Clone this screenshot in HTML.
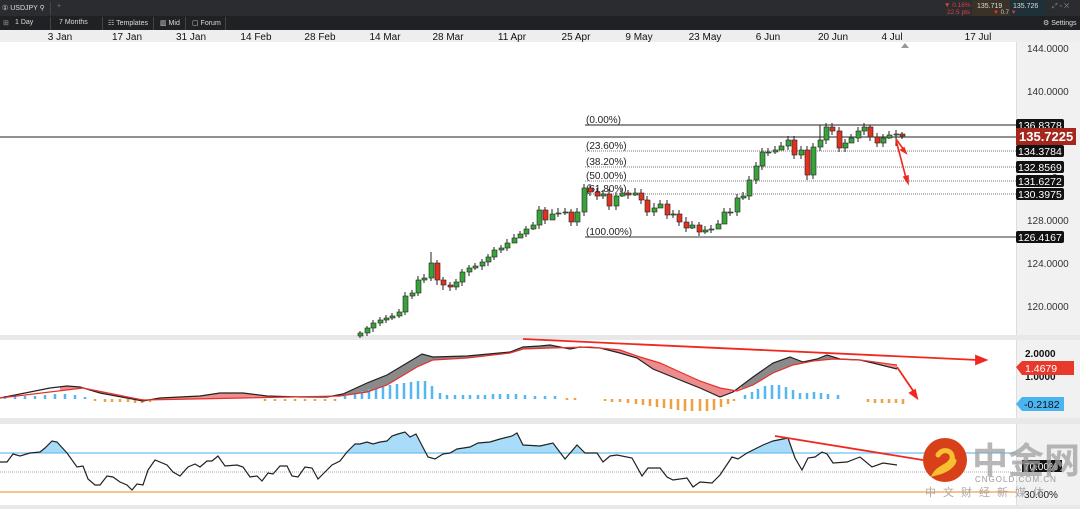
<!DOCTYPE html>
<html><head><meta charset="utf-8"><style>
body{margin:0;width:1080px;height:509px;overflow:hidden;background:#fff;font-family:"Liberation Sans",sans-serif;position:relative}
.tb{position:absolute;left:0;top:0;width:1080px;height:16px;background:#2a2c2f}
.tb2{position:absolute;left:0;top:16px;width:1080px;height:14px;background:#1f2124}
.t{position:absolute;color:#ddd;font-size:7px;white-space:nowrap}
svg{position:absolute;left:0;top:0}
</style></head><body>
<div class="tb"></div><div class="tb2"></div>
<div class="t" style="left:2px;top:4px">① USDJPY ⚲</div>
<div style="position:absolute;left:50px;top:2px;width:1px;height:13px;background:#444"></div>
<div class="t" style="left:57px;top:3px;color:#777">+</div>
<div class="t" style="left:3px;top:19px;color:#999">⊞</div>
<div class="t" style="left:15px;top:19px">1 Day</div>
<div class="t" style="left:59px;top:19px">7 Months</div>
<div class="t" style="left:108px;top:19px">☷ Templates</div>
<div class="t" style="left:160px;top:19px">▥ Mid</div>
<div class="t" style="left:192px;top:19px">▢ Forum</div>
<div style="position:absolute;left:50px;top:17px;width:1px;height:13px;background:#444"></div>
<div style="position:absolute;left:102px;top:17px;width:1px;height:13px;background:#444"></div>
<div style="position:absolute;left:153px;top:17px;width:1px;height:13px;background:#444"></div>
<div style="position:absolute;left:185px;top:17px;width:1px;height:13px;background:#444"></div>
<div style="position:absolute;left:225px;top:17px;width:1px;height:13px;background:#444"></div>
<div class="t" style="left:944px;top:2px;color:#e04040;font-size:6.5px">▼ 0.16%</div>
<div class="t" style="left:947px;top:9px;color:#e04040;font-size:6.5px">22.5 pts</div>
<div style="position:absolute;left:972px;top:0;width:38px;height:16px;background:#3a3226"></div>
<div style="position:absolute;left:1010px;top:0;width:36px;height:16px;background:#1e3038"></div>
<div class="t" style="left:977px;top:3px;font-size:7px">135.719</div>
<div class="t" style="left:1013px;top:3px;font-size:7px">135.726</div>
<div class="t" style="left:993px;top:10px;font-size:6px;color:#ccc"><span style="color:#e33">▼</span> 0.7 <span style="color:#e33">▼</span></div>
<div class="t" style="left:1052px;top:3px;color:#888">⤢ ▫ ✕</div>
<div class="t" style="left:1043px;top:19px">⚙ Settings</div>
<div style="position:absolute;left:0;top:30px;width:1080px;height:12px;background:#eee"></div>
<div style="position:absolute;left:1016px;top:42px;width:64px;height:467px;background:#f1f1f1;border-left:1px solid #ddd"></div>
<svg width="1080" height="509" font-family="Liberation Sans">
<defs>
<clipPath id="above"><rect x="0" y="420" width="1016" height="33"/></clipPath>
<clipPath id="gr"><rect x="340" y="340" width="222" height="80"/><rect x="742" y="340" width="105" height="80"/></clipPath>
<clipPath id="rd"><rect x="60" y="340" width="280" height="80"/><rect x="562" y="340" width="180" height="80"/><rect x="847" y="340" width="60" height="80"/></clipPath>
</defs>
<g font-size="10" fill="#111" text-anchor="middle">
<text x="60" y="40">3 Jan</text><text x="127" y="40">17 Jan</text><text x="191" y="40">31 Jan</text><text x="256" y="40">14 Feb</text><text x="320" y="40">28 Feb</text><text x="385" y="40">14 Mar</text><text x="448" y="40">28 Mar</text><text x="512" y="40">11 Apr</text><text x="576" y="40">25 Apr</text><text x="639" y="40">9 May</text><text x="705" y="40">23 May</text><text x="768" y="40">6 Jun</text><text x="833" y="40">20 Jun</text><text x="892" y="40">4 Jul</text><text x="978" y="40">17 Jul</text>
</g>
<path d="M901 48l4-5 4 5z" fill="#999"/>
<rect x="0" y="335" width="1080" height="5" fill="#e8e8e8"/>
<rect x="0" y="418" width="1080" height="6" fill="#e8e8e8"/>
<rect x="0" y="505" width="1080" height="4" fill="#e8e8e8"/>
<g font-size="10" fill="#333">
<text x="1027" y="52">144.0000</text><text x="1027" y="95">140.0000</text><text x="1027" y="224">128.0000</text><text x="1027" y="267">124.0000</text><text x="1027" y="310">120.0000</text><text x="1052" y="181">0</text>
</g>
<line x1="585" y1="125" x2="1016" y2="125" stroke="#222"/>
<line x1="0" y1="137" x2="1016" y2="137" stroke="#222"/>
<g stroke="#777" stroke-dasharray="1,1"><line x1="585" y1="151" x2="1016" y2="151"/><line x1="585" y1="167" x2="1016" y2="167"/><line x1="585" y1="181" x2="1016" y2="181"/><line x1="585" y1="194" x2="1016" y2="194"/></g>
<line x1="585" y1="237" x2="1016" y2="237" stroke="#777" stroke-width="1.5"/>
<g font-size="10" fill="#222"><text x="586" y="123">(0.00%)</text><text x="586" y="149">(23.60%)</text><text x="586" y="165">(38.20%)</text><text x="586" y="179">(50.00%)</text><text x="586" y="192">(61.80%)</text><text x="586" y="235">(100.00%)</text></g>
<g font-size="10.5" fill="#fff">
<rect x="1016" y="119" width="48" height="12" rx="2" fill="#111"/><text x="1018" y="129">136.8378</text>
<rect x="1016" y="145" width="48" height="12" rx="2" fill="#111"/><text x="1018" y="155">134.3784</text>
<rect x="1016" y="161" width="48" height="12" rx="2" fill="#111"/><text x="1018" y="171">132.8569</text>
<rect x="1016" y="175" width="48" height="12" rx="2" fill="#111"/><text x="1018" y="185">131.6272</text>
<rect x="1016" y="188" width="48" height="12" rx="2" fill="#111"/><text x="1018" y="198">130.3975</text>
<rect x="1016" y="231" width="48" height="12" rx="2" fill="#111"/><text x="1018" y="241">126.4167</text>
<rect x="1016" y="128" width="60" height="17" fill="#a5261c"/><text x="1019" y="141" font-size="13" font-weight="bold">135.7225</text>
</g>
<path stroke="#222" stroke-width="1" fill="none" d="M360 331v7M367 326v10M373 320v12M380 317v9M386 315v8M392 313v7M399 309v9M405 292v23M412 290v9M418 276v20M424 274v9M431 252v29M437 260v25M443 277v13M450 282v9M456 279v11M462 269v17M469 265v11M475 263v7M482 259v11M488 254v12M494 247v13M501 245v8M507 239v12M514 234v8M520 231v7M526 226v11M533 222v8M539 206v23M545 207v17M552 209v9M558 208v9M565 208v7M571 209v17M577 208v18M584 184v32M590 184v12M597 188v12M603 190v9M609 189v21M616 192v18M622 188v9M628 190v9M635 188v8M641 189v15M647 196v20M654 203v13M660 200v8M667 200v19M673 210v8M679 210v16M686 217v15M692 221v8M699 222v14M705 226v8M711 225v8M718 220v9M724 208v8M730 208v8M737 194v22M743 192v8M749 176v24M756 162v22M762 148v22M768 148v8M775 146v8M781 142v8M788 136v14M794 136v23M801 146v13M807 146v34M813 143v36M820 125v26M826 123v21M832 123v12M839 127v25M845 139v13M851 134v8M858 127v15M864 123v12M870 125v16M877 133v14M883 134v13M889 131v8M896 130v16M902 132v7"/>
<g fill="#3aa23a" stroke="#222" stroke-width=".6">
<rect x="358" y="333" width="5" height="3"/><rect x="365" y="328" width="5" height="5"/><rect x="371" y="323" width="5" height="5"/><rect x="378" y="320" width="5" height="3"/><rect x="384" y="318" width="5" height="2"/><rect x="390" y="316" width="5" height="2"/><rect x="397" y="312" width="5" height="4"/><rect x="403" y="296" width="5" height="16"/><rect x="410" y="293" width="5" height="3"/><rect x="416" y="280" width="5" height="13"/><rect x="422" y="278" width="5" height="2"/><rect x="429" y="263" width="5" height="15"/>
<rect x="454" y="282" width="5" height="5"/><rect x="460" y="272" width="5" height="10"/><rect x="467" y="268" width="5" height="4"/><rect x="473" y="266" width="5" height="2"/><rect x="480" y="262" width="5" height="4"/><rect x="486" y="257" width="5" height="5"/><rect x="492" y="250" width="5" height="7"/><rect x="499" y="248" width="5" height="2"/><rect x="505" y="243" width="5" height="5"/><rect x="512" y="238" width="5" height="5"/><rect x="518" y="234" width="5" height="4"/><rect x="524" y="229" width="5" height="5"/><rect x="531" y="225" width="5" height="4"/><rect x="537" y="210" width="5" height="15"/>
<rect x="550" y="214" width="5" height="6"/><rect x="556" y="213" width="5" height="1"/><rect x="563" y="212" width="5" height="1"/><rect x="575" y="212" width="5" height="10"/><rect x="582" y="188" width="5" height="24"/><rect x="601" y="194" width="5" height="2"/><rect x="614" y="196" width="5" height="10"/><rect x="620" y="193" width="5" height="3"/><rect x="633" y="193" width="5" height="2"/><rect x="652" y="208" width="5" height="4"/><rect x="658" y="204" width="5" height="4"/><rect x="671" y="214" width="5" height="1"/><rect x="690" y="225" width="5" height="3"/><rect x="703" y="230" width="5" height="2"/><rect x="709" y="229" width="5" height="1"/><rect x="716" y="224" width="5" height="5"/><rect x="722" y="212" width="5" height="12"/><rect x="728" y="212" width="5" height="1"/><rect x="735" y="198" width="5" height="14"/><rect x="741" y="196" width="5" height="2"/><rect x="747" y="180" width="5" height="16"/><rect x="754" y="166" width="5" height="14"/><rect x="760" y="152" width="5" height="14"/><rect x="766" y="152" width="5" height="1"/><rect x="773" y="150" width="5" height="2"/><rect x="779" y="146" width="5" height="4"/><rect x="786" y="140" width="5" height="6"/><rect x="799" y="150" width="5" height="5"/><rect x="811" y="147" width="5" height="28"/><rect x="818" y="140" width="5" height="7"/><rect x="824" y="127" width="5" height="13"/><rect x="843" y="143" width="5" height="5"/><rect x="849" y="138" width="5" height="5"/><rect x="856" y="131" width="5" height="7"/><rect x="862" y="127" width="5" height="4"/><rect x="881" y="138" width="5" height="5"/><rect x="887" y="135" width="5" height="3"/><rect x="894" y="134" width="5" height="1"/>
</g>
<g fill="#e0321f" stroke="#222" stroke-width=".6">
<rect x="435" y="263" width="5" height="17"/><rect x="441" y="280" width="5" height="5"/><rect x="448" y="285" width="5" height="2"/><rect x="543" y="210" width="5" height="10"/><rect x="569" y="212" width="5" height="10"/><rect x="588" y="188" width="5" height="4"/><rect x="595" y="192" width="5" height="4"/><rect x="607" y="194" width="5" height="12"/><rect x="626" y="193" width="5" height="2"/><rect x="639" y="193" width="5" height="7"/><rect x="645" y="200" width="5" height="12"/><rect x="665" y="204" width="5" height="11"/><rect x="677" y="214" width="5" height="8"/><rect x="684" y="222" width="5" height="6"/><rect x="697" y="225" width="5" height="7"/><rect x="792" y="140" width="5" height="15"/><rect x="805" y="150" width="5" height="25"/><rect x="830" y="127" width="5" height="4"/><rect x="837" y="131" width="5" height="17"/><rect x="868" y="127" width="5" height="10"/><rect x="875" y="137" width="5" height="6"/><rect x="900" y="134" width="5" height="2"/>
</g>
<g stroke="#f0281e" stroke-width="1.6" fill="#f0281e"><line x1="896" y1="139" x2="904" y2="150"/><path d="M906 153l-5-3 3-2z"/><line x1="896" y1="140" x2="906" y2="178"/><path d="M908 183l-4-6 4-1z"/></g>
<!-- MACD fills -->
<path clip-path="url(#gr)" fill="#8a8a8a" d="M0 398L50 388 67 386 80 387 100 393 143 401 160 398 200 396 220 393 243 393 267 396 300 397 327 397 343 394 367 383 387 375 407 363 422 354 433 357 467 356 510 352 523 347 540 346 550 345 570 349 580 347 600 348 620 353 637 358 653 369 680 380 700 388 720 397 733 392 753 377 773 363 790 357 803 362 817 359 827 355 840 359 860 360 873 363 897 369 L897 365 860 360 833 359 813 361 793 365 773 373 753 385 737 391 720 388 700 381 680 372 660 363 640 357 620 350 600 348 590 347 550 348 523 349 510 353 467 358 433 360 417 367 387 385 367 392 340 396 143 400 83 388 0 398z"/>
<path clip-path="url(#rd)" fill="#ec8c8c" d="M0 398L50 388 67 386 80 387 100 393 143 401 160 398 200 396 220 393 243 393 267 396 300 397 327 397 343 394 367 383 387 375 407 363 422 354 433 357 467 356 510 352 523 347 540 346 550 345 570 349 580 347 600 348 620 353 637 358 653 369 680 380 700 388 720 397 733 392 753 377 773 363 790 357 803 362 817 359 827 355 840 359 860 360 873 363 897 369 L897 365 860 360 833 359 813 361 793 365 773 373 753 385 737 391 720 388 700 381 680 372 660 363 640 357 620 350 600 348 590 347 550 348 523 349 510 353 467 358 433 360 417 367 387 385 367 392 340 396 143 400 83 388 0 398z"/>
<g stroke="#54b8f0" stroke-width="2.5">
<path d="M5 396v3M15 396v3M25 396v3M35 396v3M45 395v4M55 394v5M65 394v5M75 395v4M85 397v2M345 396v3M355 393v6M362 391v8M369 389v10M376 388v11M383 387v12M390 385v14M397 384v15M404 383v16M411 382v17M418 381v18M425 381v18M432 386v13M440 393v6M447 395v4M455 395v4M463 395v4M470 395v4M478 395v4M485 395v4M493 394v5M500 394v5M508 394v5M516 394v5M525 395v4M535 396v3M545 396v3M555 396v3M745 395v4M752 392v7M758 389v10M765 386v13M772 385v14M779 385v14M786 387v12M793 390v9M800 393v6M807 393v6M814 392v7M821 393v6M828 394v5M838 395v4"/>
</g>
<g stroke="#f0a040" stroke-width="2.5">
<path d="M95 399v2M105 399v3M112 399v3M120 399v3M128 399v3M135 399v4M142 399v4M150 399v3M265 399v2M275 399v2M285 399v2M295 399v2M305 399v2M315 399v2M325 399v2M335 399v2M567 398v2M575 398v2M605 399v2M612 399v3M620 399v3M628 399v4M636 399v5M643 399v6M650 399v7M657 399v8M664 399v9M671 399v10M678 399v11M685 399v12M692 399v12M700 399v12M707 399v12M714 399v11M721 399v8M728 399v5M734 399v2M868 399v3M875 399v4M882 399v4M889 399v4M896 399v4M903 399v5"/>
</g>
<path d="M0 398L50 388 67 386 80 387 100 393 143 401 160 398 200 396 220 393 243 393 267 396 300 397 327 397 343 394 367 383 387 375 407 363 422 354 433 357 467 356 510 352 523 347 540 346 550 345 570 349 580 347 600 348 620 353 637 358 653 369 680 380 700 388 720 397 733 392 753 377 773 363 790 357 803 362 817 359 827 355 840 359 860 360 873 363 897 369" fill="none" stroke="#222" stroke-width="1.2"/>
<path d="M0 398L83 388 143 400 340 396 367 392 387 385 417 367 433 360 467 358 510 353 523 349 550 348 590 347 600 348 620 350 640 357 660 363 680 372 700 381 720 388 737 391 753 385 773 373 793 365 813 361 833 359 860 360 897 365" fill="none" stroke="#e8302a" stroke-width="1.2"/>
<g stroke="#f0281e" stroke-width="1.8" fill="#f0281e"><line x1="523" y1="339" x2="978" y2="360"/><path d="M986 360l-10-4 0 8z"/><line x1="897" y1="367" x2="914" y2="392"/><path d="M917 398l-7-5 5-3z"/></g>
<g font-size="10" fill="#111"><text x="1025" y="357" font-weight="bold">2.0000</text><text x="1025" y="380" font-weight="bold">1.0000</text></g>
<path d="M1016 367l6-6h52v14h-52z" fill="#e83a2c"/><text x="1025" y="372" font-size="10.5" fill="#fff">1.4679</text>
<path d="M1016 404l6-7h42v14h-42z" fill="#4ab4f0"/><text x="1024" y="408" font-size="10.5" fill="#111">-0.2182</text>
<!-- RSI -->
<path clip-path="url(#above)" fill="#a8dcf8" d="M0 462L7 462 13 454 20 456 30 453 40 452 45 448 52 441 57 442 67 453 77 467 83 466 88 479 95 485 100 485 107 476 113 477 120 482 127 485 132 490 137 484 143 485 148 470 155 460 167 465 173 472 180 476 188 467 195 464 200 467 207 461 212 461 218 456 225 466 237 465 243 467 250 477 257 476 262 481 268 473 273 474 280 466 287 466 292 476 298 477 305 467 312 468 318 479 325 472 332 465 340 461 347 452 355 444 360 444 367 442 373 444 380 442 387 441 392 436 398 434 405 432 410 437 416 434 428 457 435 459 443 454 450 453 457 449 470 447 478 443 490 442 500 439 512 436 517 433 523 445 540 446 553 443 565 459 577 445 585 453 597 453 603 462 610 456 617 455 632 458 642 476 648 468 660 468 667 477 673 480 687 478 693 487 700 482 712 483 720 475 732 457 738 459 747 453 763 445 773 441 788 438 795 458 802 470 808 458 815 457 822 452 827 454 833 463 847 462 860 457 872 467 883 463 897 465 L897 453 0 453z"/>
<line x1="0" y1="453" x2="1016" y2="453" stroke="#6cc0f0" stroke-width="1.2"/>
<line x1="0" y1="472" x2="1016" y2="472" stroke="#aaa" stroke-dasharray="1,1"/>
<line x1="0" y1="492" x2="1016" y2="492" stroke="#f0a040" stroke-width="1.2"/>
<path fill="none" stroke="#222" stroke-width="1.2" d="M0 462L7 462 13 454 20 456 30 453 40 452 45 448 52 441 57 442 67 453 77 467 83 466 88 479 95 485 100 485 107 476 113 477 120 482 127 485 132 490 137 484 143 485 148 470 155 460 167 465 173 472 180 476 188 467 195 464 200 467 207 461 212 461 218 456 225 466 237 465 243 467 250 477 257 476 262 481 268 473 273 474 280 466 287 466 292 476 298 477 305 467 312 468 318 479 325 472 332 465 340 461 347 452 355 444 360 444 367 442 373 444 380 442 387 441 392 436 398 434 405 432 410 437 416 434 428 457 435 459 443 454 450 453 457 449 470 447 478 443 490 442 500 439 512 436 517 433 523 445 540 446 553 443 565 459 577 445 585 453 597 453 603 462 610 456 617 455 632 458 642 476 648 468 660 468 667 477 673 480 687 478 693 487 700 482 712 483 720 475 732 457 738 459 747 453 763 445 773 441 788 438 795 458 802 470 808 458 815 457 822 452 827 454 833 463 847 462 860 457 872 467 883 463 897 465"/>
<line x1="775" y1="436" x2="935" y2="462" stroke="#f0281e" stroke-width="1.8"/>
<rect x="1022" y="460" width="40" height="12" fill="#111"/>
<text x="1024" y="470" font-size="10" fill="#fff">70.00%</text>
<text x="1024" y="498" font-size="10" fill="#222">30.00%</text>
<circle cx="945" cy="460" r="22" fill="#d8401a"/>
<path d="M938 455c5-8 16-4 14 4 -2 7-12 8-16 14 8-2 16-6 18-12" fill="none" stroke="#f6c030" stroke-width="5" stroke-linecap="round"/>
<text x="972" y="473" font-size="36" fill="#a0a0a0" opacity=".75" font-family="Noto Sans CJK SC" font-weight="bold">中金网</text>
<text x="975" y="482" font-size="8" fill="#999" letter-spacing="1">CNGOLD.COM.CN</text>
<text x="925" y="496" font-size="11" fill="#aaa" letter-spacing="7" font-family="Noto Sans CJK SC">中文财经新媒体</text>
</svg>
</body></html>
